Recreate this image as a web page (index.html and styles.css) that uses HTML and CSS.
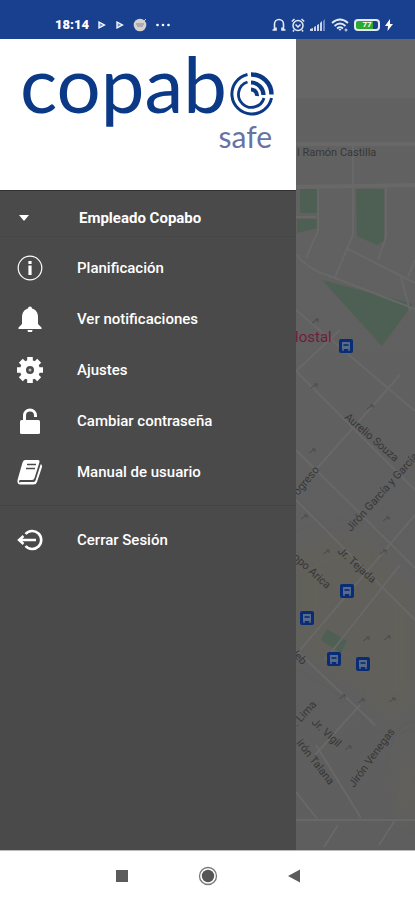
FILE: index.html
```html
<!DOCTYPE html>
<html lang="es">
<head>
<meta charset="utf-8">
<meta name="viewport" content="width=device-width, initial-scale=1">
<title>Copabo Safe</title>
<link rel="stylesheet" href="styles.css">
</head>
<body>
<header class="status">
  <div class="status-group">
    <span class="clock">18:14</span>
    <svg viewBox="0 0 10 10" width="10" height="10"><path d="M2 2 7.500 5 2 8Z" fill="#6f8fd0" stroke="#fff" stroke-width="1.300"/></svg>
    <svg viewBox="0 0 10 10" width="10" height="10"><path d="M2 2 7.500 5 2 8Z" fill="#6f8fd0" stroke="#fff" stroke-width="1.300"/></svg>
    <svg viewBox="0 0 14 14" width="14" height="14"><circle cx="7" cy="7" r="6.300" fill="#d3d0cf"/><path d="M3 6h8M4 8h6" stroke="#9f9fa4" stroke-width="1.300"/><path d="m10 4 3-3" stroke="#d3d0cf"/></svg>
    <svg viewBox="0 0 16 4" width="16" height="4" fill="#fff"><circle cx="2.500" cy="2" r="1.300"/><circle cx="8" cy="2" r="1.300"/><circle cx="13.500" cy="2" r="1.300"/></svg>
  </div>
  <div class="status-group status-right">
    <svg viewBox="0 0 14 14" width="14" height="14" fill="none" stroke="#e3e9f7" stroke-width="1.600"><path d="M2.500 12V6a4.500 4.500 0 0 1 9 0v6M.5 12H4V9.500M13.500 12H10V9.500"/></svg>
    <svg viewBox="0 0 14 14" width="14" height="14" fill="none" stroke="#e3e9f7" stroke-width="1.500"><circle cx="7" cy="7.500" r="5"/><path d="M.8 3.500 3.500 1M13.200 3.500 10.500 1M4.500 6.500 7 9l2.500-2.500M3 12l-1 1.500M11 12l1 1.500"/></svg>
    <svg viewBox="0 0 16 12" width="16" height="12" fill="#c9d4ec"><path d="M0 12V10l3-1v3ZM4 12V8l2-1v5ZM7 12V6l2-1v7ZM10 12V4l2-2v10Z"/><path d="M13 12V2l2-2v12Z" fill="#7189c0"/></svg>
    <svg viewBox="0 0 18 14" width="18" height="14" fill="none" stroke="#e3e9f7" stroke-width="1.800"><path d="M1 5Q9-2 17 5M3.500 8Q9 3 14.500 8M6 10.500Q9 8 12 10.500"/><path d="m7.500 11 1.500 2 1.500-2Z" fill="#e3e9f7" stroke="none"/><circle cx="15" cy="12" r="1" stroke-width="1"/></svg>
    <span class="battery">77</span>
    <svg viewBox="0 0 8 12" width="8" height="12" fill="#fff"><path d="M5 0 0 7h3L2.500 12 8 5H5Z"/></svg>
  </div>
</header>

<main class="screen">
  <aside class="drawer">
    <div class="brand">
      <div class="brand-name"><span>copab</span>
        <svg class="brand-mark" viewBox="0 0 44 44" width="44" height="44" fill="none" stroke="#0b3986">
          <path d="M17.500 2.500A20 20 0 1 0 41.500 26" stroke-width="3"/>
          <path d="M21 2.500A20 20 0 0 1 41.500 22.500" stroke-width="4.500"/>
          <path d="M17.500 10A13 13 0 1 0 34 26" stroke-width="2.800"/>
          <path d="M21 10.500A12.500 12.500 0 0 1 33.500 23" stroke-width="4.200"/>
          <path d="M21 17.500A6 6 0 0 1 27 24" stroke-width="4"/>
        </svg>
      </div>
      <div class="brand-sub">safe</div>
    </div>
    <button class="account" type="button">
      <svg viewBox="0 0 10 6" width="10" height="6"><path d="M0 0h10L5 6Z" fill="#fff"/></svg>
      <span>Empleado Copabo</span>
    </button>
    <nav class="menu">
      <a href="#planificacion"><svg viewBox="0 0 26 26" fill="none" stroke="#fff"><circle cx="13" cy="13" r="11.800" stroke-width="1.200"/><path d="M13 10.500V20" stroke-width="3.200"/><path d="M13 6v3" stroke-width="3.200"/></svg>Planificación</a>
      <a href="#notificaciones"><svg viewBox="0 0 26 26" fill="#fff"><path d="M11 2.500a2 2 0 0 1 4 0C19 3.500 21 7 21 11v7l3.500 3.500V23h-23v-1.500L5 18v-7c0-4 2-7.500 6-8.500ZM10.500 24h5a2.500 2.500 0 0 1-5 0Z"/></svg>Ver notificaciones</a>
      <a href="#ajustes"><svg viewBox="0 0 26 26" fill="none" stroke="#fff"><circle cx="13" cy="13" r="7" stroke-width="6"/><path d="M13 0v5M13 21v5M0 13h5M21 13h5M3.800 3.800l3.500 3.500M18.700 18.700l3.500 3.500M22.200 3.800l-3.500 3.500M7.300 18.700l-3.500 3.500" stroke-width="5.600"/><circle cx="13" cy="13" r="1.500" fill="#bbb" stroke="none"/></svg>Ajustes</a>
      <a href="#contrasena"><svg viewBox="0 0 26 26" fill="none" stroke="#fff"><rect x="3" y="12" width="20" height="14" rx="1.500" fill="#fff" stroke="none"/><path d="M7.500 13V7.500a5.500 5.500 0 0 1 11 0V9" stroke-width="3"/></svg>Cambiar contraseña</a>
      <a href="#manual"><svg viewBox="0 0 26 26"><path d="M8 1h13q2 0 1.500 2l-5 16q-.5 2-2.500 2H3q-1 0-1 1.500T4 23h12q2 0 2.500-1.500L23.800 5q1.700 1 1.200 3l-5 15q-.8 2.500-3.500 2.500h-13Q0 25.500.5 21L5.500 3.500Q6.200 1 8 1Z" fill="#fff"/><path d="M10 5.500h9M9 9.500h9" stroke="#4a4a4a" stroke-width="1.700"/></svg>Manual de usuario</a>
      <a class="logout" href="#salir"><svg viewBox="0 0 26 26" fill="none" stroke="#fff" stroke-width="2.600"><path d="M8.500 7A9 9 0 1 1 8.500 19"/><path d="M19 13H2M6.500 9 2 13l4.500 4" stroke-width="2.400"/></svg>Cerrar Sesión</a>
    </nav>
  </aside>

  <section class="map" aria-label="Mapa">
    <svg viewBox="296 39 119 811" preserveAspectRatio="xMinYMin slice">
      <defs>
        <linearGradient id="ground" x1="0" y1="0" x2="0" y2="1"><stop offset="0" stop-color="#626262"/><stop offset="1" stop-color="#5e5e5e"/></linearGradient>
        <filter id="soft" x="-50%" y="-50%" width="200%" height="200%"><feGaussianBlur stdDeviation="9"/></filter>
        <g id="bus"><rect width="14" height="14" rx="2" fill="#082c75"/><path d="M3 3h8v7H3Z" fill="#596b8b"/><path d="M4.500 5h5v2h-5Z" fill="#183975"/><path d="M4 10v2M10 10v2" stroke="#596b8b" stroke-width="1.500"/></g>
        <path id="arrow" d="M-3 2 3-2M0-2h3v3" fill="none" stroke="#4b4b4b"/>
      </defs>
      <rect x="296" y="39" width="119" height="811" fill="url(#ground)"/>
      <rect x="296" y="39" width="119" height="59" fill="#666"/>
      <path d="M296 555q40-30 75-8l44 50v103l-25 20-30-35-64-40Z" fill="#62605a" filter="url(#soft)"/>
      <path d="M415 730v90l-20-20Z" fill="#64615a" filter="url(#soft)"/>
      <g fill="#4e6053"><path d="M300 189h17v24h-17ZM297 219h20v9l-20 5ZM356 189h28v52l-7 4-20-9ZM322 280l91 24-31 42ZM327 629l20 12-6 12-20-13Z"/></g>
      <g fill="none" stroke="#686868" stroke-width="2">
        <path stroke-width="4" d="M296 144H415M296 187 415 185"/>
        <path d="M318 187v44l-12 27M353 145v90l-18 42M386 187v50l-8 23M297 255q10 14 30 20l88 34M346 248l69 35M401 277l9 34M415 260l-7 17M296 217h20"/>
        <path d="M296 310 415 411M296 371 415 490M400 375 320 465l-24 30M296 450l119 118M296 500 415 620M415 515 300 650M296 650 375 725M400 565l-75 95M360 705l-45 50M316 745 361 818M296 792l22 28M296 820h119M395 820l-16 25M338 825l-14 22M296 371 340 330"/>
      </g>
      <use href="#arrow" x="315" y="321"/><use href="#arrow" x="314" y="386"/><use href="#arrow" x="370" y="407"/><use href="#arrow" x="312" y="451"/><use href="#arrow" x="304" y="517"/><use href="#arrow" x="386" y="519"/><use href="#arrow" x="326" y="552"/><use href="#arrow" x="383" y="552"/><use href="#arrow" x="366" y="639"/><use href="#arrow" x="387" y="638"/><use href="#arrow" x="342" y="697"/><use href="#arrow" x="361" y="701"/><use href="#arrow" x="392" y="700"/><use href="#arrow" x="348" y="748"/>
      <use href="#bus" x="339" y="339"/><use href="#bus" x="340" y="584"/><use href="#bus" x="300" y="611"/><use href="#bus" x="327" y="652"/><use href="#bus" x="356" y="657"/>
      <g class="streets">
        <text x="297" y="156">l Ramón Castilla</text>
        <text class="poi" x="288" y="342">Hostal</text>
        <text transform="translate(344 418) rotate(41)">Aurelio Souza</text>
        <text transform="translate(351 532) rotate(-48)">Jirón García y García</text>
        <text transform="translate(298 496) rotate(-50)">ogreso</text>
        <text transform="translate(337 552) rotate(42)">Jr. Tejada</text>
        <text transform="translate(292 558) rotate(42)">opo Arica</text>
        <text transform="translate(290 652) rotate(48)">Jeb</text>
        <text transform="translate(297 727) rotate(-48)">. Lima</text>
        <text transform="translate(311 723) rotate(43)">Jr. Vigil</text>
        <text transform="translate(296 743) rotate(52)">irón Talana</text>
        <text transform="translate(354 788) rotate(-54)">Jirón Venegas</text>
      </g>
    </svg>
  </section>
</main>

<footer class="navbar">
  <button type="button" aria-label="Recientes"><svg viewBox="0 0 20 20" width="20" height="20"><path d="M4 4h12v12H4Z" fill="#5b5b5b"/></svg></button>
  <button type="button" aria-label="Inicio"><svg viewBox="0 0 20 20" width="20" height="20"><circle cx="10" cy="10" r="8.500" fill="none" stroke="#777" stroke-width="1.300"/><circle cx="10" cy="10" r="6.200" fill="#555"/></svg></button>
  <button type="button" aria-label="Atrás"><svg viewBox="0 0 20 20" width="20" height="20"><path d="M4 10 16 3.500v13Z" fill="#5b5b5b"/></svg></button>
</footer>
</body>
</html>
```

FILE: styles.css
```css
* { box-sizing: border-box; }
body {
  margin: 0;
  min-height: 100vh;
  display: flex;
  flex-direction: column;
  font-family: Roboto, "Liberation Sans", sans-serif;
  color: #fff;
  background: #fff;
}
svg { display: block; flex: none; }
button { border: 0; background: none; padding: 0; font: inherit; color: inherit; }

.status {
  display: flex;
  justify-content: space-between;
  align-items: center;
  padding: 10px 22px 0 55px;
  height: 39px;
  background: #19408e;
}
.status-group { display: flex; align-items: center; gap: 8px; }
.status-right { gap: 5px; }
.clock { font-size: 13px; line-height: 16px; font-weight: 900; }
.battery {
  width: 26px;
  height: 12px;
  border: 2px solid #e3e9f7;
  border-radius: 4px;
  background: linear-gradient(90deg, #2fa82f 75%, #19408e 75%);
  font-size: 8px;
  line-height: 8px;
  font-weight: 700;
  text-align: center;
}

.screen { flex: 1; display: flex; background: #4a4a4a; }
.drawer { width: 296px; flex: none; background: #4a4a4a; }
.brand {
  height: 151px;
  padding: 5px 22px 0 20px;
  background: #fff;
  color: #0b3986;
  font-family: Lato, sans-serif;
}
.brand-name { display: flex; justify-content: space-between; font-size: 78px; line-height: 78px; }
.brand-mark { margin-top: 28px; }
.brand-sub {
  padding-right: 2px;
  font-size: 30px;
  line-height: 30px;
  margin-top: -1px;
  text-align: right;
  color: #6673a5;
}
.account {
  display: flex;
  align-items: center;
  gap: 50px;
  width: 100%;
  height: 47px;
  padding: 8px 19px 0;
  border-top: 1px solid #333;
  border-bottom: 1px solid #464646;
  font-size: 15px;
  font-weight: 700;
}
.menu { display: flex; flex-direction: column; padding-top: 5px; }
.menu a {
  display: flex;
  align-items: center;
  gap: 34px;
  height: 51px;
  padding-left: 17px;
  color: #fff;
  font-size: 15px;
  font-weight: 500;
  text-decoration: none;
}
.menu svg { width: 26px; height: 26px; }
.menu .logout { height: 68px; margin-top: 8px; border-top: 1px solid #434343; }

.map { flex: 1; min-width: 0; overflow: hidden; background: #606060; }
.map svg { width: 100%; height: 100%; }
.streets { fill: #373737; font-size: 11px; }
.streets .poi { fill: #701d3b; font-size: 15px; }

.navbar {
  display: flex;
  justify-content: center;
  align-items: center;
  gap: 66px;
  height: 50px;
  border-top: 1px solid #bbb;
  background: #fff;
}
```
